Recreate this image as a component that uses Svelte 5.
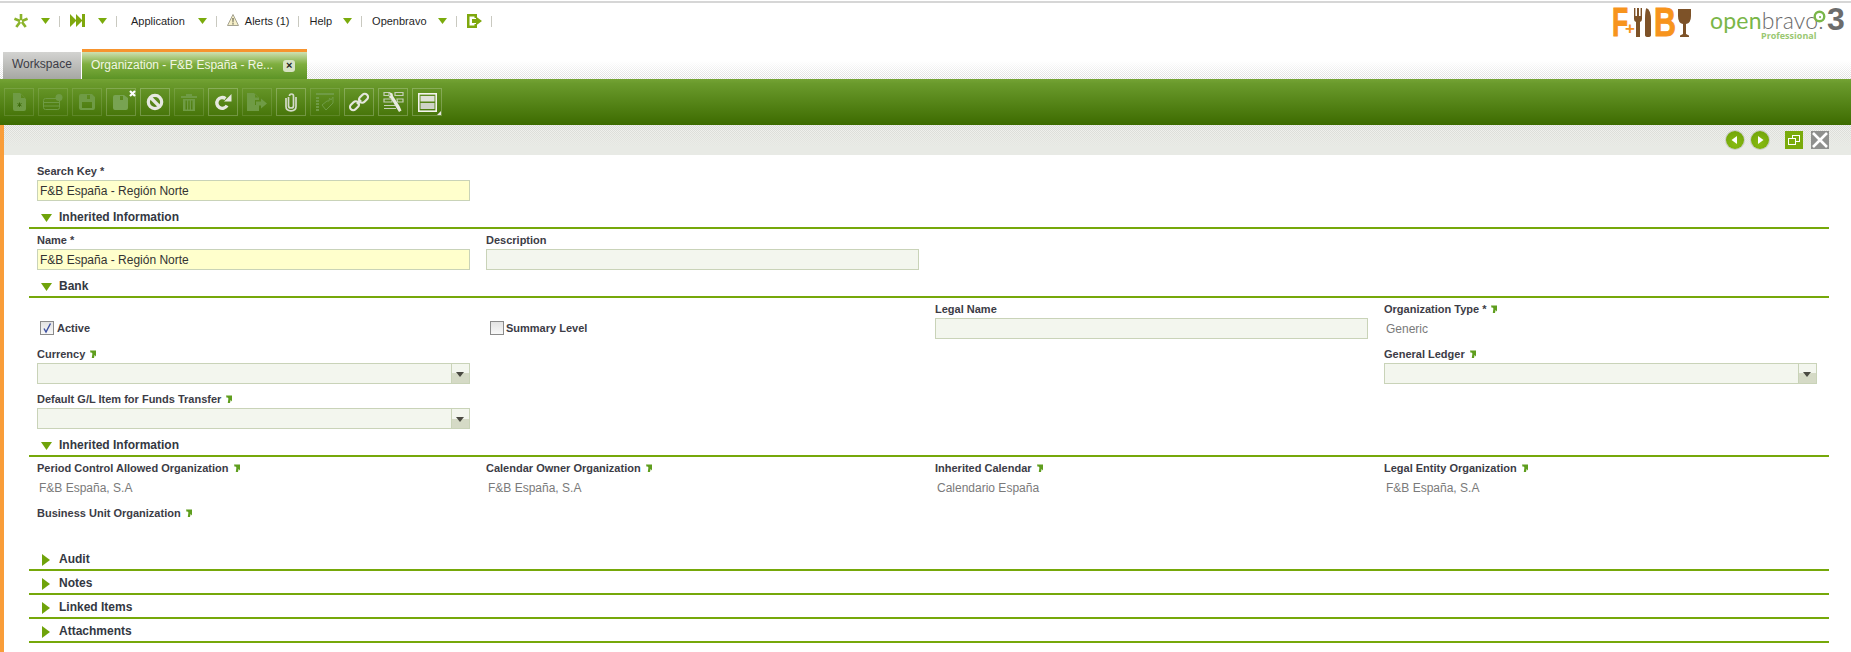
<script>
	const row1 = ['Period Control Allowed Organization', 'Calendar Owner Organization', 'Inherited Calendar', 'Legal Entity Organization'];
	const row1Values = ['F&B España, S.A', 'F&B España, S.A', 'Calendario España', 'F&B España, S.A'];
	const closed = ['Audit', 'Notes', 'Linked Items', 'Attachments'];
</script>

{#snippet caret()}
	<svg class="caret" width="9" height="6" viewBox="0 0 9 6"><path d="M0 0H9L4.5 6Z" fill="#7aab0c" /></svg>
{/snippet}

{#snippet link()}
	<svg class="lnk" width="7" height="8" viewBox="0 0 7 8"><path d="M1 .5H7V6.500L5.600 5 5 8H2.800L3.400 3.400 2.600 2.400 1.600 2.800Z" fill="#5f9e1e" /></svg>
{/snippet}

{#snippet section(title)}
	<div class="section">
		<svg width="12" height="8" viewBox="0 0 12 8"><path d="M0 0H11L5.5 8Z" fill="#6fa30a" /></svg>
		<span>{title}</span>
	</div>
{/snippet}

<div class="topline"></div>
<header class="nav">
	<svg width="14" height="14" viewBox="0 0 15 15"><g stroke="#8ab32a" stroke-width="2.8"><path d="M7.5 0V6.5" /><path d="M0.5 5L6.5 7.5" /><path d="M14.5 5L8.5 7.5" /><path d="M2.5 14L6.5 8.5" /><path d="M12.5 14L8.5 8.5" /></g></svg>
	{@render caret()}
	<i class="sep"></i>
	<svg width="15" height="13" viewBox="0 0 15 13"><path d="M0 0L6 6V0L12 6V0H15V13H12V7L6 13V7L0 13Z" fill="#7fa80e" /></svg>
	{@render caret()}
	<i class="sep"></i>
	<span class="menu first">Application</span>
	{@render caret()}
	<i class="sep"></i>
	<svg width="12" height="12" viewBox="0 0 12 12"><path d="M6 .5L11.5 11.5H.5Z" fill="#f6efc8" stroke="#a5a391" /><path d="M5.4 4H6.6L6.4 8.4H5.6ZM5.4 9.2H6.6V10.4H5.4Z" fill="#554" /></svg>
	<span class="menu alerts">Alerts (1)</span>
	<i class="sep"></i>
	<span class="menu tight">Help</span>
	{@render caret()}
	<i class="sep"></i>
	<span class="menu tight">Openbravo</span>
	{@render caret()}
	<i class="sep"></i>
	<svg width="15" height="14" viewBox="0 0 15 14"><path d="M0 0H10V4H7.5V2.4H2.5V11.6H7.5V10H10V14H0Z" fill="#7fa80e" /><path d="M5 5H9V2.5L15 7 9 11.5V9H5Z" fill="#7fa80e" /></svg>
	<i class="sep"></i>

	<div class="logos">
		<div class="fb">
			<span class="fb-f">F</span>
			<em>+</em>
			<svg class="fork" width="8" height="29" viewBox="0 0 8 29"><path d="M0 0H1.400V8H3V0H5V8H6.600V0H8V11Q8 13.500 6 14V29H2V14Q0 13.500 0 11Z" fill="#7d5228" /></svg>
			<svg class="knife" width="6" height="29" viewBox="0 0 6 29"><path d="M1.500 0Q6 2 6 12V27Q6 29 3 29 0 29 0 27V12Q0 2 1.500 0Z" fill="#7d5228" /></svg>
			<span class="fb-b">B</span>
			<svg class="cup" width="13" height="29" viewBox="0 0 13 29"><path d="M0 1H13V8Q13 15 8 16V26L11 27.500V29H2V27.500L5 26V16Q0 15 0 8Z" fill="#7d5228" /></svg>
		</div>
		<div class="ob">
			<div class="ob-main">
				<div class="ob-name"><b>open</b><span>bravo.</span></div>
				<div class="ob-ed">Professional</div>
			</div>
			<svg class="ob-swirl" width="13" height="13" viewBox="0 0 12 12"><circle cx="6" cy="6" r="4.4" fill="none" stroke="#7ab648" stroke-width="2.2" /><circle cx="6.500" cy="6.500" r="1" fill="#7ab648" /></svg>
			<div class="ob-three">3</div>
		</div>
	</div>
</header>

<div class="tabbar">
	<div class="tab plain">Workspace</div>
	<div class="tab active">
		<span>Organization - F&amp;B España - Re...</span>
		<span class="tabx">×</span>
	</div>
</div>

<div class="toolbar">
	<button class="off" aria-label="New"><svg width="18" height="20" viewBox="0 0 18 20"><path class="g" d="M3 1H10L16 7V17Q16 19 14 19H5Q3 19 3 17ZM11 1.500V6H15.500Z" fill-rule="evenodd" /><path d="M9.500 10.500V15M7.500 11.500L11.500 14M11.500 11.500L7.500 14" stroke="#3f6e0c" /></svg></button>
	<button class="off" aria-label="New row"><svg width="22" height="18" viewBox="0 0 22 18"><g class="ln"><rect x="1.500" y="5.500" width="16" height="11" rx="2" /><path d="M1.500 9.500H17.500M1.500 13H17.500" /></g><circle class="g" cx="17" cy="4.500" r="3.500" /></svg></button>
	<button class="off" aria-label="Save"><svg width="18" height="18" viewBox="0 0 18 18"><path class="g" d="M3 1H14L17 4V15Q17 17 15 17H3Q1 17 1 15V3Q1 1 3 1ZM9 2V6H12V2ZM4 9H14V15H4Z" fill-rule="evenodd" /></svg></button>
	<button class="half" aria-label="Save and close"><svg width="18" height="18" viewBox="0 0 18 18"><path class="g" d="M3 2H12L16 5V15Q16 17 14 17H3Q1 17 1 15V4Q1 2 3 2ZM8 3V7H11V3Z" fill-rule="evenodd" /></svg><svg class="mini" width="7" height="7" viewBox="0 0 7 7"><path d="M1 1L6 6M6 1L1 6" stroke="#fff" stroke-width="2.200" /></svg></button>
	<button class="on" aria-label="Undo"><svg width="18" height="18" viewBox="0 0 18 18"><circle cx="9" cy="9" r="6.700" fill="none" stroke="#e6e8e0" stroke-width="3.200" /><path d="M4.500 4.500L13.500 13.500" stroke="#e6e8e0" stroke-width="3.200" /></svg></button>
	<button class="off" aria-label="Delete"><svg width="18" height="20" viewBox="0 0 18 20"><path class="g" d="M1 4H17V6H1ZM6 2H12V4H6ZM3 7H15V19H3ZM5.500 8.500V17.500H7V8.500ZM8.300 8.500V17.500H9.700V8.500ZM11 8.500V17.500H12.500V8.500Z" fill-rule="evenodd" /></svg></button>
	<button class="on" aria-label="Refresh"><svg width="20" height="18" viewBox="0 0 20 18"><path d="M14 12.500A5.400 5.400 0 1 1 12.500 5.600" fill="none" stroke="#e6e8e0" stroke-width="3.400" /><path d="M11 8.500H18.500V1Z" fill="#e6e8e0" /></svg></button>
	<button class="off" aria-label="Export"><svg width="22" height="20" viewBox="0 0 22 20"><path class="g" d="M1 1H8L13 6V8H9V13H13V19H1ZM9 1.500V5.500H13Z" fill-rule="evenodd" /><path class="g" d="M10 9.500H15V6.500L21 11.500 15 16.500V13.500H10Z" /></svg></button>
	<button class="clip" aria-label="Attach"><svg width="14" height="20" viewBox="0 0 14 20"><path d="M4.500 5V14Q4.500 16 7 16T9.500 14V4Q9.500 2 7.500 2T5.500 4M2 6V14.500Q2 18.800 7 18.800T12 14.500V5" fill="none" stroke="#d5dbca" stroke-width="1.700" /></svg></button>
	<button class="off" aria-label="Audit"><svg width="20" height="20" viewBox="0 0 20 20"><g class="ln"><path d="M1 2H19" stroke-width="2" /><path d="M1 6H4M1 9H4M1 12H4M1 15H4M1 18H4" stroke-width="2" /><path d="M7 13L12 9H14L14.500 6 16 8 18 5V11L11 18Z" /></g></svg></button>
	<button class="on" aria-label="Link"><svg width="20" height="20" viewBox="0 0 20 20"><g fill="none" stroke="#e4e7dc" stroke-width="2.200"><rect x=".5" y="10.500" width="10" height="6.400" rx="3.200" transform="rotate(-45 5.500 13.700)" /><rect x="9.500" y="3" width="10" height="6.400" rx="3.200" transform="rotate(-45 14.500 6.200)" /><path d="M8 12L12 8" /></g></svg></button>
	<button class="on" aria-label="Tools"><svg width="21" height="22" viewBox="0 0 21 22"><g fill="none" stroke="#c6d0b8" stroke-width="1.200"><path d="M1 1.500H6V4.500H1ZM12 1.500H20V4.500H12ZM1 8H9V11H1ZM14 8H20V11H14.500ZM1 14.500H12M1 17.500H13" /></g><path d="M6 1L9.500 2.500 10 5 16.500 15 18.500 19.500 16 21 13.500 17 8 7.500 5.500 6 7.500 4.500Z" fill="#e8eae0" /></svg></button>
	<button class="on" aria-label="Layout"><svg width="19" height="19" viewBox="0 0 19 19"><rect x=".8" y=".8" width="17.400" height="17.400" fill="none" stroke="#f4f4ee" stroke-width="1.600" /><rect x="2.500" y="3" width="14" height="5.500" fill="#dfe2d8" /><rect x="2.500" y="10" width="14" height="6" fill="#cfd3c8" /></svg><i class="corner"></i></button>
</div>

<div class="body">
	<div class="statusbar">
		<span class="round"><svg width="18" height="18" viewBox="0 0 18 18"><path d="M11 5V13L5.500 9Z" fill="#fff" /></svg></span>
		<span class="round next"><svg width="18" height="18" viewBox="0 0 18 18"><path d="M7 5V13L12.500 9Z" fill="#fff" /></svg></span>
		<span class="square green"><svg width="18" height="18" viewBox="0 0 18 18"><g fill="none" stroke="#fff"><rect x="7.500" y="4.500" width="7" height="6" /><rect x="3.500" y="7.500" width="7" height="6" fill="#7aab0c" /></g></svg></span>
		<span class="square gray"><svg width="18" height="18" viewBox="0 0 18 18"><path d="M2 2L16 16M16 2L2 16" stroke="#fff" stroke-width="2.600" /></svg></span>
	</div>

	<div class="form">
		<div class="grid">
			<div class="field">
				<label>Search Key *</label>
				<div class="input req">F&amp;B España - Región Norte</div>
			</div>
		</div>

		{@render section('Inherited Information')}
		<div class="grid">
			<div class="field">
				<label>Name *</label>
				<div class="input req">F&amp;B España - Región Norte</div>
			</div>
			<div class="field">
				<label>Description</label>
				<div class="input"></div>
			</div>
		</div>

		{@render section('Bank')}
		<div class="grid bank">
			<div class="check">
				<span class="box"><svg width="12" height="12" viewBox="0 0 12 12"><path d="M3 6.500L5 10 9.500 1.500" fill="none" stroke="#3c4fa0" stroke-width="1.400" /></svg></span>
				Active
			</div>
			<div class="check">
				<span class="box"></span>
				Summary Level
			</div>
			<div class="field">
				<label>Legal Name</label>
				<div class="input"></div>
			</div>
			<div class="field">
				<label>Organization Type * {@render link()}</label>
				<div class="value">Generic</div>
			</div>
			<div class="field">
				<label>Currency {@render link()}</label>
				<div class="input combo"><span class="drop"></span></div>
			</div>
			<div class="field col4">
				<label>General Ledger {@render link()}</label>
				<div class="input combo"><span class="drop"></span></div>
			</div>
			<div class="field row3">
				<label>Default G/L Item for Funds Transfer {@render link()}</label>
				<div class="input combo"><span class="drop"></span></div>
			</div>
		</div>

		{@render section('Inherited Information')}
		<div class="grid inherited">
			{#each row1 as name, i}
				<div class="field">
					<label>{name} {@render link()}</label>
					<div class="value">{row1Values[i]}</div>
				</div>
			{/each}
			<div class="field">
				<label>Business Unit Organization {@render link()}</label>
			</div>
		</div>

		<div class="closed">
			{#each closed as title}
				<div class="section">
					<svg width="8" height="12" viewBox="0 0 8 12"><path d="M0 0L8 6 0 12Z" fill="#6fa30a" /></svg>
					<span>{title}</span>
				</div>
			{/each}
		</div>
	</div>
</div>

<style>
	:global(body) {
		margin: 0;
		background: #fff;
		font-family: 'Liberation Sans', Arial, sans-serif;
		font-size: 11px;
		color: #333;
		overflow: hidden;
	}
	.topline {
		height: 3px;
		box-sizing: border-box;
		border-bottom: 2px solid #d6d6d6;
	}
	.nav {
		height: 46px;
		display: flex;
		align-items: flex-start;
		padding: 11px 10px 0 14px;
		box-sizing: border-box;
		color: #1f1f1f;
		line-height: 14px;
	}
	.caret { margin: 4px 0 0 13px; flex: none; }
	.sep {
		width: 1px;
		height: 11px;
		margin: 2px 10px 0 9px;
		background: #c9c9c0;
		flex: none;
	}
	.first { margin-left: 4px; }
	.alerts { margin-left: 6px; }
	.tight { margin-right: -2px; }
	.logos {
		margin-left: auto;
		display: flex;
		margin-top: -8px;
	}
	.fb {
		display: flex;
		width: 79px;
		height: 29px;
		margin: 2px 19px 0 0;
		font: bold 40px/29px 'Liberation Sans', sans-serif;
		color: #f7941d;
	}
	.fb-f {
		width: 13px;
		transform: scaleX(0.66);
		transform-origin: left;
		-webkit-text-stroke: 1px #f7941d;
	}
	.fb em {
		width: 9px;
		margin-top: 12px;
		font: bold 17px/17px 'Liberation Sans', sans-serif;
	}
	.fork { margin-right: 3px; flex: none; }
	.knife { margin-right: 3px; flex: none; }
	.fb-b {
		width: 24px;
		transform: scaleX(0.76);
		transform-origin: left;
		-webkit-text-stroke: 1px #f7941d;
	}
	.cup { flex: none; }
	.ob {
		display: flex;
		width: 131px;
		height: 36px;
		margin-top: -3px;
	}
	.ob-main { width: 103px; padding-top: 8px; }
	.ob-name {
		height: 19px;
		font: 300 23px/19px Lato, sans-serif;
		letter-spacing: 0.2px;
		white-space: nowrap;
	}
	.ob-name b, .ob-name span { display: inline-block; height: 19px; }
	.ob-name b { color: #7ab648; font-weight: 400; }
	.ob-name span { color: #6a6a6a; }
	.ob-ed {
		margin: 1px 0 0 51px;
		font: bold 9px/9px 'Open Sans', sans-serif;
		color: #9ac872;
		white-space: nowrap;
	}
	.ob-swirl { margin-top: 7px; flex: none; }
	.ob-three {
		margin: 3px 0 0 1px;
		height: 26px;
		font: bold 32px/26px 'Liberation Sans', sans-serif;
		color: #6c6c6c;
	}
	.tabbar {
		height: 30px;
		display: flex;
		align-items: flex-end;
		padding-left: 3px;
		box-sizing: border-box;
		background:
			linear-gradient(#fff 40%, rgba(255, 255, 255, 0) 100%),
			repeating-conic-gradient(#dcdcdc 0 25%, #fff 0 50%) 0 0 / 2px 2px;
	}
	.tab {
		height: 27px;
		line-height: 25px;
		font-size: 12px;
		box-sizing: border-box;
	}
	.plain {
		width: 79px;
		padding-left: 9px;
		color: #3c3c46;
		background: linear-gradient(#d3d3d1, #a6a7a3);
		border-right: 1px solid #fff;
	}
	.active {
		width: 225px;
		height: 30px;
		display: flex;
		align-items: center;
		padding-left: 9px;
		border-top: 3px solid #f7942e;
		color: #f1f6e4;
		background: linear-gradient(#cfe0b2, #7fae3f 45%, #5d9426);
	}
	.tabx {
		width: 12px;
		height: 12px;
		margin-left: 10px;
		border-radius: 3px;
		background: #d7e2c4;
		color: #222;
		font: bold 11px/11px 'Liberation Sans', sans-serif;
		text-align: center;
	}
	.toolbar {
		height: 46px;
		display: flex;
		gap: 4px;
		padding: 9px 0 0 4px;
		box-sizing: border-box;
		background: linear-gradient(#74a334, #6a9a2c 10%, #3d6b00);
	}
	button {
		position: relative;
		width: 30px;
		height: 28px;
		padding: 0;
		background: none;
		display: flex;
		align-items: center;
		justify-content: center;
		box-sizing: border-box;
	}
	.off { border: 1px solid rgba(255, 255, 255, 0.12); }
	.half { border: 1px solid rgba(255, 255, 255, 0.2); }
	.on, .clip { border: 1px solid rgba(255, 255, 255, 0.23); }
	.g { fill: #78a352; }
	.off .g { fill: #6f9b45; }
	.ln { fill: none; stroke: #6f9b45; }
	.mini { position: absolute; right: -1px; top: 1px; }
	.corner {
		position: absolute;
		right: 0;
		bottom: 0;
		width: 0;
		height: 0;
		border-left: 4px solid transparent;
		border-bottom: 4px solid #e6e6e0;
	}
	.body {
		height: 527px;
		border-left: 4px solid #f99d39;
		box-sizing: border-box;
	}
	.statusbar {
		height: 30px;
		display: flex;
		align-items: flex-start;
		padding: 5px 22px 0 0;
		justify-content: flex-end;
		box-sizing: border-box;
		background:
			linear-gradient(rgba(232, 234, 229, 0), #e8eae5 75%),
			repeating-conic-gradient(#d8d9d4 0 25%, #f2f2ef 0 50%) 0 0 / 2px 2px;
	}
	.round {
		width: 18px;
		height: 18px;
		border-radius: 50%;
		margin-top: 1px;
		background: radial-gradient(circle at 50% 70%, #88bb11, #6da008);
		box-shadow: 0 0 0 1px #c9ccc4;
	}
	.next { margin-left: 7px; }
	.square { width: 18px; height: 18px; margin-top: 1px; }
	.green { background: #7aab0c; margin-left: 16px; }
	.gray { background: #8f908e; margin-left: 8px; }
	svg { display: block; }
	.form {
		padding-top: 8px;
	}
	.grid {
		display: grid;
		grid-template-columns: repeat(4, 449px);
		padding-left: 33px;
		grid-auto-rows: 45px;
	}
	.field label {
		display: flex;
		align-items: center;
		gap: 4px;
		height: 15px;
		padding-bottom: 2px;
		font-weight: bold;
		color: #3c3c46;
		white-space: nowrap;
	}
	.input {
		position: relative;
		width: 433px;
		height: 21px;
		box-sizing: border-box;
		border: 1px solid #c9d3b8;
		background: #f3f6ee;
		padding-left: 2px;
		font-size: 12px;
		line-height: 21px;
		color: #333;
	}
	.req { background: #ffffcc; }
	.drop {
		position: absolute;
		right: 0;
		top: 0;
		width: 17px;
		height: 19px;
		border-left: 1px solid #c9d3b8;
		background: linear-gradient(#f3f6ee 50%, #d5dac6 50%);
	}
	.drop::after {
		content: '';
		position: absolute;
		left: 4px;
		top: 8px;
		border-top: 5px solid #4a4a42;
		border-left: 4px solid transparent;
		border-right: 4px solid transparent;
	}
	.value {
		padding-left: 2px;
		font-size: 12px;
		line-height: 23px;
		color: #7a7a7a;
	}
	.section {
		display: flex;
		align-items: center;
		gap: 6px;
		height: 21px;
		margin: 0 22px 3px 25px;
		padding-left: 12px;
		box-sizing: border-box;
		border-bottom: 2px solid #76a80a;
		font: bold 12px/14px 'Liberation Sans', sans-serif;
		color: #333842;
	}
	.section span { margin-top: -2px; }
	.check {
		display: flex;
		align-items: center;
		gap: 2px;
		height: 17px;
		margin-top: 18px;
		font-weight: bold;
		color: #3c3c46;
	}
	.box {
		width: 12px;
		height: 12px;
		border: 1px solid #8b8b8b;
		background: linear-gradient(#e3e3e3, #f8f8f8);
		display: block;
	}
	.check:first-child { padding-left: 3px; gap: 3px; }
	.check:nth-child(2) { padding-left: 4px; }
	.col4 { grid-column: 4; }
	.row3 { grid-column: 1; }
	.closed .section { padding-left: 13px; gap: 9px; }
</style>
